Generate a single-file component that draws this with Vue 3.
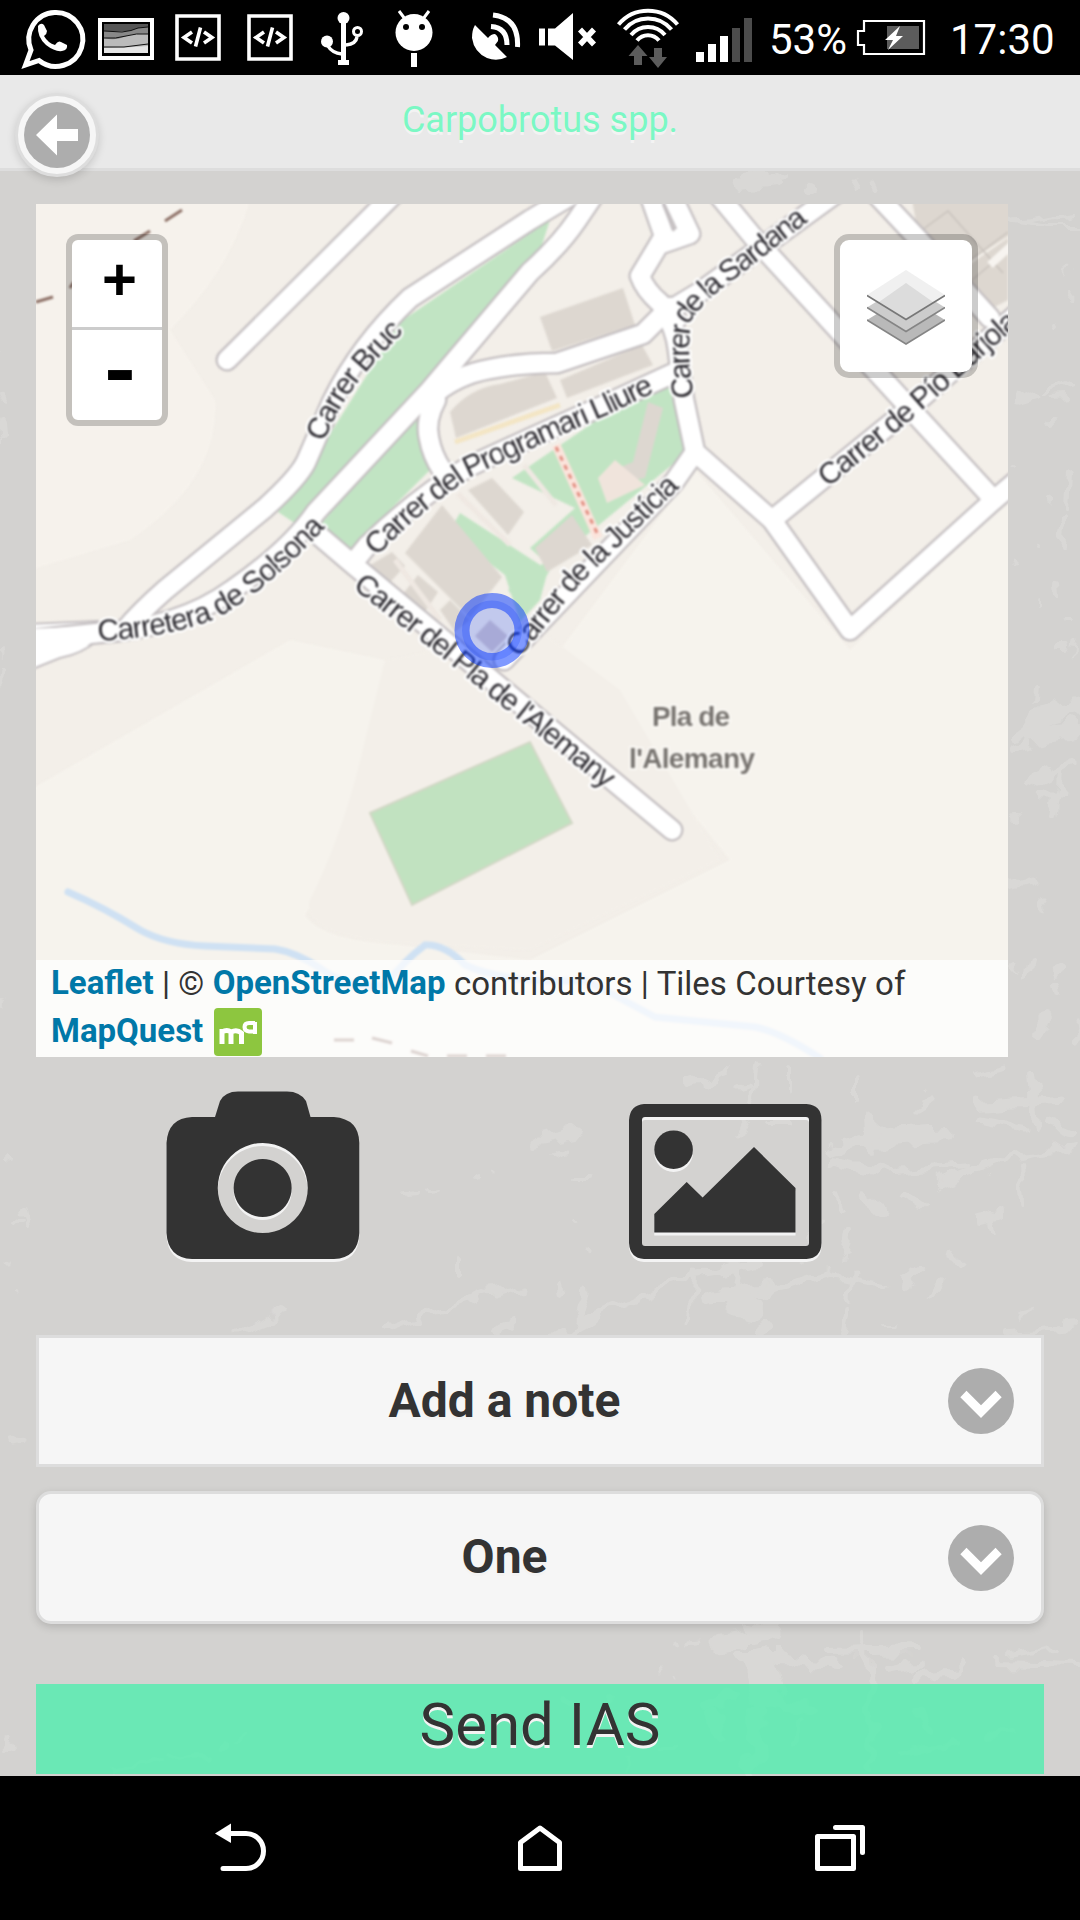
<script setup>
const scratches = [
  [745, 176, 762, 172, 10], [735, 186, 775, 182, 14], [780, 175, 790, 173, 6], [856, 176, 853, 190, 5], [870, 184, 873, 190, 7], [806, 186, 809, 188, 6],
  [1012, 222, 1078, 214, 4], [1012, 222, 1050, 227, 4], [1050, 227, 1079, 227, 4], [1018, 400, 1038, 394, 7], [1048, 391, 1070, 383, 6], [1056, 397, 1068, 396, 4],
  [1066, 275, 1074, 264, 3], [1067, 300, 1069, 290, 4], [1058, 323, 1059, 326, 4], [1052, 420, 1055, 420, 4], [1012, 465, 1013, 466, 5], [1071, 472, 1069, 508, 6],
  [1062, 545, 1067, 520, 8], [1048, 500, 1048, 504, 4], [1012, 558, 1012, 562, 5], [1036, 550, 1037, 552, 4], [1054, 585, 1055, 595, 6], [1039, 600, 1039, 606, 4],
  [1064, 618, 1070, 618, 4], [1060, 645, 1066, 645, 8], [1074, 640, 1072, 655, 3], [1037, 700, 1038, 690, 6], [1016, 736, 1040, 718, 12], [1040, 718, 1080, 705, 18],
  [1030, 735, 1079, 728, 16], [1012, 750, 1030, 745, 8], [1028, 785, 1070, 765, 7], [1060, 775, 1054, 820, 6], [1040, 795, 1054, 795, 9], [1014, 820, 1016, 820, 6],
  [1010, 887, 1034, 880, 7], [1042, 900, 1044, 908, 7], [1030, 960, 1026, 978, 8], [1054, 975, 1064, 970, 8], [1056, 985, 1058, 994, 6], [1014, 970, 1018, 968, 6], [1036, 1035, 1045, 1018, 12], [1076, 1020, 1078, 1038, 7],
  [2, 345, 2, 352, 4], [0, 392, 4, 398, 6], [2, 420, 3, 438, 6], [3, 655, 4, 656, 5], [2, 670, 1, 682, 5], [0, 1000, 2, 1001, 4],
  [688, 1083, 732, 1072, 6], [757, 1068, 752, 1110, 5], [790, 1066, 790, 1090, 4], [742, 1088, 750, 1085, 5], [754, 1100, 740, 1135, 5], [765, 1122, 784, 1122, 4],
  [533, 1143, 580, 1134, 8], [553, 1157, 563, 1152, 4], [408, 1194, 418, 1193, 6], [432, 1192, 438, 1191, 4], [478, 1174, 478, 1178, 4], [495, 1170, 495, 1173, 3], [577, 1180, 583, 1180, 4],
  [572, 1218, 573, 1222, 4], [459, 1260, 459, 1274, 6], [589, 1250, 590, 1256, 5], [560, 1285, 562, 1294, 5], [588, 1290, 578, 1325, 7], [496, 1296, 526, 1287, 5], [386, 1331, 480, 1295, 6],
  [480, 1295, 526, 1290, 4], [240, 1331, 289, 1311, 5], [545, 1345, 590, 1320, 8], [590, 1320, 690, 1275, 6], [690, 1275, 760, 1262, 8], [495, 1331, 510, 1325, 8], [695, 1270, 691, 1325, 5],
  [710, 1298, 770, 1288, 16], [735, 1305, 760, 1310, 20], [760, 1290, 830, 1275, 8], [830, 1275, 885, 1285, 5], [850, 1230, 845, 1255, 8], [852, 1270, 850, 1298, 7], [850, 1310, 845, 1331, 6],
  [755, 1330, 772, 1326, 8], [885, 1326, 900, 1326, 4], [908, 1280, 922, 1270, 8], [930, 1295, 940, 1280, 5], [952, 1260, 956, 1262, 7], [830, 1150, 880, 1135, 11], [860, 1140, 945, 1134, 14],
  [870, 1120, 872, 1145, 14], [855, 1080, 855, 1100, 6], [830, 1162, 880, 1172, 10], [880, 1172, 970, 1165, 6], [940, 1183, 1000, 1160, 8], [1000, 1160, 1076, 1145, 6], [1020, 1165, 1023, 1200, 6],
  [835, 1195, 840, 1206, 6], [862, 1195, 882, 1210, 9], [905, 1195, 920, 1205, 8], [978, 1220, 1002, 1215, 8], [990, 1215, 993, 1232, 6], [915, 1110, 935, 1098, 7], [975, 1105, 1060, 1100, 10],
  [1030, 1075, 1035, 1125, 10], [980, 1120, 1020, 1128, 7], [1050, 1122, 1070, 1130, 8], [975, 1075, 1010, 1068, 5], [1005, 1330, 1079, 1325, 6], [1020, 1318, 1030, 1312, 5],
  [820, 1225, 800, 1260, 5], [740, 1270, 735, 1290, 7], [24, 1207, 29, 1230, 6], [5, 1160, 5, 1163, 4], [16, 1221, 20, 1222, 6], [8, 1264, 12, 1264, 5], [16, 1296, 17, 1297, 3], [11, 1442, 18, 1441, 9],
  [720, 1643, 775, 1632, 15], [745, 1625, 765, 1630, 10], [740, 1655, 780, 1655, 12], [760, 1665, 765, 1690, 34], [780, 1660, 835, 1665, 8], [865, 1628, 862, 1650, 6], [868, 1650, 870, 1695, 8],
  [830, 1652, 920, 1650, 8], [890, 1670, 915, 1665, 8], [918, 1675, 955, 1672, 9], [955, 1672, 965, 1660, 5], [995, 1663, 1079, 1665, 6], [1010, 1655, 1055, 1647, 4], [672, 1645, 675, 1648, 4],
  [690, 1643, 700, 1642, 5], [660, 1670, 662, 1676, 3], [675, 1678, 676, 1680, 3], [710, 1705, 735, 1695, 10], [715, 1715, 720, 1735, 12], [755, 1710, 757, 1770, 12], [765, 1700, 810, 1708, 10],
  [800, 1720, 795, 1740, 7], [870, 1700, 873, 1770, 7], [745, 1760, 750, 1775, 10], [565, 1701, 566, 1703, 7], [610, 1700, 614, 1696, 4], [220, 1748, 230, 1743, 6], [170, 1758, 205, 1754, 5],
  [110, 1770, 160, 1760, 5], [240, 1740, 242, 1739, 4], [662, 1750, 672, 1750, 6], [8, 1742, 9, 1750, 8], [625, 1757, 625, 1774, 3], [900, 1755, 960, 1745, 5], [920, 1710, 930, 1725, 8], [985, 1740, 1010, 1730, 6],
]

const roads = [
  'M400,188 L227,360',
  'M570,196 L530,220 L410,298 Q360,345 332,402 L306,462 Q298,478 265,508 L165,590 Q140,612 125,630',
  'M596,192 L577,220 Q560,245 530,272 L430,390 L316,512 Q290,550 232,590 Q180,628 98,633 L30,640',
  'M316,533 L350,562 L672,830',
  'M354,562 L367,546 Q420,495 470,466 Q530,438 600,407 L676,372',
  'M430,398 Q455,375 490,369 Q520,363 557,363 L643,334 L670,307',
  'M436,400 Q425,420 429,438 Q432,455 442,470',
  'M650,196 L664,236 L640,276 Q645,290 660,303 L676,320',
  'M672,196 L690,234 L664,243',
  'M663,308 Q676,330 678,350 L684,400 L695,452 L772,520 L850,630 L994,500 L1020,478',
  'M662,315 L700,292 L835,194',
  'M716,192 L754,238 L904,402 L994,500',
  'M874,192 L921,242 L990,318',
  'M772,520 L905,412 L1016,315',
  'M695,452 L674,482 L504,660',
]

const labels = [
  { id: 'bruc', d: 'M314,438 Q326,405 351,373 Q374,345 404,316', text: 'Carrer Bruc', len: 142 },
  { id: 'solsona', d: 'M97,630 Q170,626 212,608 Q258,584 320,517', text: 'Carretera de Solsona', len: 256 },
  { id: 'pla', d: 'M359,579 L439,641 L507,696 L620,787', text: "Carrer del Pla de l'Alemany", len: 324 },
  { id: 'programari', d: 'M369,549 Q415,500 470,465 Q540,432 600,406 L665,375', text: 'Carrer del Programari Lliure', len: 330 },
  { id: 'justicia', d: 'M511,651 L573,575 L680,472', text: 'Carrer de la Justícia', len: 236 },
  { id: 'sardana', d: 'M683,399 Q674,345 682,314 Q696,292 735,265 L830,190', text: 'Carrer de la Sardana', len: 243 },
  { id: 'pio', d: 'M821,479 L900,415 L1030,300', text: 'Carrer de Pío Barjola', len: 252 },
]
</script>

<template>
  <div class="screen">
    <header class="status">
      <div class="icons">
        <svg width="90" height="75" viewBox="2 1 90 75"><path d="M27.500,66 L33,51 A27,27 0 1 1 41,61.500 Z" fill="none" stroke="#fff" stroke-width="5" /><path d="M40,27 Q43,23 46,26 L49,32 Q49,35 46,37 Q50,44 57,46 Q60,41 63,43 L69,46 Q70,51 64,52 Q57,53 48,46 Q39,38 40,27Z" fill="#fff" /></svg>
        <svg width="75" height="75" viewBox="90 0 75 75"><rect x="100" y="20" width="52" height="38" fill="#000" stroke="#fff" stroke-width="4" /><path d="M104,24h44v29h-44z" fill="#e6e6e6" /><path d="M104,24h44v22l-14,1 -30,1z" fill="#bbb" /><path d="M104,24h44v10q-14,-1 -24,3t-20,1z" fill="#888" /><path d="M104,24h44v3q-10,0 -18,4l-26,0z" fill="#555" /><path d="M104,31l18,1q10,-1 16,-4l10,-1M104,38q12,1 22,-2t22,-2M104,47l20,0 24,-3" fill="none" stroke="#111" stroke-width="1" /></svg>
        <svg width="72" height="75" viewBox="165 0 72 75"><path d="M177,16h42v43h-42zM192,32l-8,5.500 8,5.500M204,32l8,5.500 -8,5.500M200.500,27.500l-5,19" fill="none" stroke="#fff" stroke-width="3.600" /></svg>
        <svg width="72" height="75" viewBox="165 0 72 75"><path d="M177,16h42v43h-42zM192,32l-8,5.500 8,5.500M204,32l8,5.500 -8,5.500M200.500,27.500l-5,19" fill="none" stroke="#fff" stroke-width="3.600" /></svg>
        <svg width="71" height="75" viewBox="309 0 71 75"><g fill="#fff"><circle cx="343.500" cy="18" r="6" /><circle cx="327" cy="41.500" r="6" /><path d="M338,60h11v5h-11zM341,18h5v43h-5z" /></g><path d="M328,46q4,7 14,8M346,45q10,-1 11,-8" fill="none" stroke="#fff" stroke-width="3.500" /><circle cx="357.500" cy="31.500" r="4" fill="none" stroke="#fff" stroke-width="3" /></svg>
        <svg width="70" height="75" viewBox="380 0 70 75"><ellipse cx="414" cy="32.500" rx="18.500" ry="18.500" fill="#fff" /><path d="M399,11l6,8M429,11l-6,8" stroke="#fff" stroke-width="3" /><path d="M411,53h6v14h-6z" fill="#fff" /><circle cx="406" cy="27" r="3" /><circle cx="422" cy="27" r="3" /></svg>
        <svg width="80" height="75" viewBox="450 0 80 75"><path d="M475,25 L488,38 Q491,34 495,34 Q499,37 498,41 L495,45 L507,57 Q497,62 487,58 Q474,52 472,38 Q472,30 475,25Z" fill="#fff" /><path d="M491,26.500q16,1 16,18.500M493,15q26,3 24.500,32" fill="none" stroke="#fff" stroke-width="5" /></svg>
        <svg width="75" height="75" viewBox="530 0 75 75"><path d="M539,28.500h6v17h-6zM548,28.500h7L573,13v47L555,45.500h-7z" fill="#fff" /><path d="M580,29.500l14,15M594,29.500l-14,15" stroke="#fff" stroke-width="5.500" /></svg>
        <svg width="85" height="75" viewBox="605 0 85 75"><path d="M618.500,24.500a38.500,38.500 0 0 1 59,0M624.500,29.500a30.500,30.500 0 0 1 47,0M631,35a22,22 0 0 1 34,0M637,40.500a14,14 0 0 1 22,0" fill="none" stroke="#fff" stroke-width="4" /><path d="M638,45l9.500,11h-5.500v9h-8v-9h-5.500zM658,68l-9,-11h5v-9h8v9h5z" fill="#5c5c5c" /></svg>
        <svg width="72" height="75" viewBox="690 0 72 75"><path d="M696,52h8v10h-8zM708,44h8v18h-8zM720,36h8v26h-8z" fill="#fff" /><path d="M732,28h8v34h-8zM744,18h8v44h-8z" fill="#4c4c4c" /></svg>
      </div>
      <span class="percent">53%</span>
      <svg class="battery" width="72" height="75" viewBox="855 0 72 75"><path d="M864,21h60v33h-60v-9h-6v-14h6z" fill="none" stroke="#fff" stroke-width="2.200" /><path d="M887,26h32v23h-32z" fill="#5c5c5c" /><path d="M900,26l-15,14h8l-5,10 15,-14h-7z" fill="#fff" /></svg>
      <span class="clock">17:30</span>
    </header>

    <main class="page">
      <svg class="texture" viewBox="0 171 1080 1605">
        <filter id="rough" x="0" y="0" width="100%" height="100%"><feTurbulence type="fractalNoise" baseFrequency=".05" numOctaves="2" seed="4" /><feDisplacementMap in="SourceGraphic" scale="24" xChannelSelector="R" yChannelSelector="G" /></filter>
        <g filter="url(#rough)"><rect x="0" y="171" width="1080" height="1605" fill="#d3d2d0" stroke="none" /><line v-for="(s, i) in scratches" :key="i" :x1="s[0]" :y1="s[1]" :x2="s[2]" :y2="s[3]" :stroke-width="s[4]" /></g>
      </svg>

      <div class="titlebar">
        <h1>Carpobrotus spp.</h1>
        <button class="back" aria-label="Back"><svg width="66" height="66" viewBox="24 102 66 66"><circle cx="57" cy="135" r="33" fill="#adadad" /><path d="M36,135L57,114.500V129H78v12H57v14.500z" fill="#fff" /></svg></button>
      </div>

      <section class="map">
        <svg class="tiles" viewBox="36 204 972 853">
          <rect x="36" y="204" width="972" height="853" fill="#f3efe9" />
          <g class="soft">
            <path d="M30,200H250Q230,270 170,330L215,400Q220,480 130,540L30,570z" fill="#f6f2ec" />
            <path d="M30,790L290,640 385,660 370,760Q345,850 305,915Q320,940 400,945L530,960 730,860 560,650 695,470 850,650 1010,500V1060H30z" fill="#f6f3ed" />
            <path d="M385,660L540,630 620,690 720,860 530,950 380,942Q300,930 310,900Q345,830 365,740z" fill="#f3efe9" />
            <g fill="#c1e4c3">
              <path d="M550,220L530,282 430,388 305,530 278,512 320,450 400,322z" />
              <path d="M422,408L432,468 392,508 352,558 320,525z" />
              <path d="M512,478L600,418 670,382 690,450 605,520 556,560 525,612 508,590 545,562 530,548 575,508z" />
              <path d="M460,513L449,532 505,575 520,622 540,600 548,570z" />
            </g>
            <g fill="#ddd7d0">
              <path d="M540,317L623,288 635,325 552,351z" /><path d="M560,380L642,345 653,365 567,398z" />
              <path d="M450,412Q470,388 500,384L545,372 557,398 456,438z" />
              <path d="M468,490L492,478 524,512 508,535z" /><path d="M405,553L442,505 502,577 470,618z" />
              <path d="M362,570L392,552 405,566 385,588zM402,595L418,575 438,592 425,612zM440,610L450,600 470,620 455,632z" />
              <path d="M535,548L572,515 592,545 547,572z" /><path d="M648,402L663,408 645,478 620,482 608,472 633,462z" />
              <path d="M475,636L490,620 508,636 492,652z" fill="#d3c9cd" />
              <path d="M912,200H1010V235L955,270 918,233z" /><path d="M955,275L1008,238V300L985,312z" />
            </g>
            <path d="M598,478L615,460 645,485 607,503z" fill="#f0e4dc" />
            <path d="M918,233l30,-22 55,62M1008,232l-60,45M960,290l30,-25" fill="none" stroke="#c9c3bd" stroke-width="1.500" />
            <path d="M990,265L1012,245" stroke="#f7f4f0" stroke-width="8" />
            <path d="M455,442L560,405M395,525L430,488" stroke="#f3e5c4" stroke-width="5" />
            <path d="M458,494L510,545M395,560L440,620M524,465L556,505" stroke="#efe8e2" stroke-width="5" />
            <path d="M556,445L598,538" stroke="#fbe4dc" stroke-width="9" /><path d="M556,447L598,535" stroke="#e29184" stroke-width="3" stroke-dasharray="5 5" />
            <path d="M370,813L530,742 572,823 412,905z" fill="#c1e2c0" stroke="#d2d7c6" stroke-width="2" />
            <path d="M68,892Q105,908 140,930Q165,944 205,946L275,949Q295,952 320,968Q350,990 385,985Q405,960 425,945Q445,944 465,965Q510,985 585,980Q620,998 655,1017L755,1027Q780,1032 820,1058" fill="none" stroke="#cfe1f3" stroke-width="7" stroke-linecap="round" />
            <path d="M36,302l17,-5M70,288l4,-6M134,241l16,-10M165,221l17,-11M334,1040h20M372,1038l20,5M411,1051l17,5M447,1056h20M486,1056h20" fill="none" stroke="#8d7066" stroke-width="3" />
            <path d="M30,624L98,621 98,640Q82,654 60,658L30,670z" fill="#fff" stroke="#c4bfc1" stroke-width="2" />
            <g fill="none" stroke-linecap="round" stroke-linejoin="round">
              <path v-for="d in roads" :key="d" :d="d" stroke="#c4bfc1" stroke-width="23" />
              <path v-for="d in roads" :key="d" :d="d" stroke="#fff" stroke-width="18.500" />
            </g>
            <path d="M26,629L100,626 94,641Q80,652 58,656L26,667z" fill="#fff" />
            <path d="M663,204L674,231" stroke="#c4bfc1" stroke-width="2.500" />
            <g class="street">
              <template v-for="l in labels" :key="l.id">
                <path :id="l.id" :d="l.d" fill="none" stroke="none" />
                <text :textLength="l.len" dominant-baseline="central"><textPath :href="'#' + l.id" :textLength="l.len">{{ l.text }}</textPath></text>
              </template>
            </g>
            <g class="place"><text x="691" y="726" textLength="78">Pla de</text><text x="692" y="768" textLength="126">l'Alemany</text></g>
          </g>
          <circle cx="492" cy="630.500" r="30" fill="#03f" fill-opacity=".2" stroke="#03f" stroke-opacity=".5" stroke-width="15" />
        </svg>
        <div class="zoom"><button>+</button><button class="out">-</button></div>
        <div class="layers"><svg width="78" height="76" viewBox="867 270 78 76"><path d="M867,320l39,-24 39,24 -39,24z" fill="#b9b9b9" /><path d="M867,320l39,24 39,-24" fill="none" stroke="#858585" stroke-width="1.500" /><path d="M867,307.500l39,-24 39,24 -39,24z" fill="#ccc" /><path d="M867,307.500l39,24 39,-24" fill="none" stroke="#858585" stroke-width="1.500" /><path d="M867,295l39,-25 39,25 -39,24z" fill="#f0f0f0" /><path d="M879,302l27,-19 27,19 -27,17z" fill="#dcdcdc" /><path d="M867,295.500l39,24 39,-24" fill="none" stroke="#777" stroke-width="1.700" /></svg></div>
        <div class="credit"><a>Leaflet</a> | © <a>OpenStreetMap</a> contributors | Tiles Courtesy of <a>MapQuest</a> <svg width="48" height="48" viewBox="0 0 48 48"><rect width="48" height="48" rx="4" fill="#8dc63f" /><path d="M8,36V21M8,24q5,-3 9,0v12M17,24q6,-3 10.500,1v11" fill="none" stroke="#fff" stroke-width="5" /><path d="M41,26V14M41,15h-6q-4.500,0 -4.500,4t4.500,4.500h6" fill="none" stroke="#fff" stroke-width="4" /></svg></div>
      </section>

      <div class="media">
        <svg width="194" height="173" viewBox="166 1091 194 173"><path fill-rule="evenodd" d="M192,1117H215L220,1101Q225,1091.500 238,1091.500H287Q300,1091.500 306,1101L310.500,1117H334Q359,1119 359.300,1143V1233Q358,1258 334,1259H192Q168,1258 166.500,1233V1143Q168,1118 192,1117ZM262.700,1143a45,45 0 1 0 .1,0ZM262.700,1159a29,29 0 1 1 -.1,0Z" /></svg>
        <svg width="194" height="160" viewBox="629 1104 194 160"><path fill-rule="evenodd" d="M644,1104H806.500Q821.500,1105 821.500,1120V1243Q821,1258 806.500,1259H644Q630,1258 629,1243V1120Q630,1105 644,1104ZM645,1117Q642,1117 642,1120V1243Q642,1246 645,1246H806Q809,1246 809,1243V1120Q809,1117 806,1117Z" /><circle cx="673.600" cy="1149.700" r="19.300" /><path d="M654.300,1232.500V1214L686.700,1182 702.600,1197.500 754,1147 795.500,1188V1232.500z" /></svg>
      </div>

      <button v-for="(label, i) in ['Add a note', 'One']" :key="label" class="field" :class="{ select: i === 1 }">
        <span>{{ label }}</span>
        <svg width="66" height="66" viewBox="948 1368 66 66"><circle cx="981" cy="1401" r="33" fill="#adadad" /><path d="M960.300,1397.300l6.200,-6.500 14.500,14.500 14.500,-14.500 6.200,6.500L981,1418z" fill="#fff" /></svg>
      </button>

      <button class="send">Send IAS</button>
    </main>

    <nav class="nav">
      <svg width="54" height="50" viewBox="214 1823 54 50"><path d="M215,1833.500l16,-10v19.500z" fill="#fff" /><path d="M229,1833.500h17a17.500,17.500 0 0 1 0,35h-23" fill="none" stroke="#fff" stroke-width="5" stroke-linecap="round" /></svg>
      <svg width="54" height="50" viewBox="513 1823 54 50"><path d="M520.500,1868.500V1842.500L540,1828l19.500,14.500v26z" fill="none" stroke="#fff" stroke-width="5" stroke-linejoin="round" /></svg>
      <svg width="54" height="50" viewBox="812 1823 54 50"><path d="M817.500,1836.500h36v32h-36zM835.500,1827.500h27v25" fill="none" stroke="#fff" stroke-width="5" stroke-linejoin="round" stroke-linecap="round" /></svg>
    </nav>
  </div>
</template>

<style>
body { margin: 0; background: #000; }
</style>

<style scoped>
.screen { width: 1080px; height: 1920px; display: flex; flex-direction: column; overflow: hidden; font-family: Roboto, "Liberation Sans", sans-serif; color: #333; }
svg { display: block; flex: none; }
button { font-family: inherit; color: inherit; margin: 0; padding: 0; border: 0; background: none; }
.status { height: 75px; flex: none; display: flex; align-items: center; background: #000; color: #fff; font-size: 42px; line-height: 75px; white-space: nowrap; }
.icons { display: flex; width: 762px; }
.percent { width: 86px; margin-left: 7px; padding-top: 4px; box-sizing: border-box; }
.clock { margin-left: 23px; padding-top: 4px; }
.page { position: relative; height: 1701px; flex: none; display: flex; flex-direction: column; background: #d3d2d0; }
.texture { position: absolute; left: 0; top: 96px; width: 1080px; height: 1605px; stroke: #d9d8d6; stroke-linecap: round; }
.titlebar { position: relative; height: 93px; flex: none; background: #e9e9e9; border-bottom: 3px solid #ddd; }
h1 { margin: 0; padding-top: 20px; text-align: center; font-size: 36px; line-height: 50px; font-weight: 400; color: #7bf8c4; text-shadow: 0 3px 0 #f3f3f3; }
.back { position: absolute; left: 15px; top: 18px; width: 84px; height: 84px; box-sizing: border-box; padding: 6px; border: 3px solid #ddd; border-radius: 50%; background: #f6f6f6; box-shadow: 0 3px 9px rgba(0, 0, 0, .15); }
.map { position: relative; width: 972px; height: 853px; flex: none; margin: 33px 0 0 36px; overflow: hidden; }
.tiles { width: 972px; height: 853px; }
.soft { filter: blur(.9px); }
.street { font: 30px "Liberation Sans", sans-serif; fill: #2c2a30; stroke: #fff; stroke-width: 5px; paint-order: stroke; stroke-linejoin: round; }
.place { font: bold 28px "Liberation Sans", sans-serif; text-anchor: middle; fill: #77736f; stroke: #faf8f4; stroke-width: 4px; paint-order: stroke; }
.zoom { position: absolute; left: 30px; top: 30px; width: 90px; border: 6px solid rgba(0, 0, 0, .2); border-radius: 12px; background: #fff; background-clip: padding-box; }
.zoom button { display: block; width: 90px; height: 90px; box-sizing: border-box; padding-left: 5px; font: bold 60px/74px "Liberation Mono", monospace; color: #000; border-bottom: 3px solid #ccc; }
.zoom .out { border: 0; padding-left: 6px; font-size: 84px; line-height: 84px; }
.layers { position: absolute; right: 30px; top: 30px; width: 132px; height: 132px; display: flex; align-items: center; justify-content: center; border: 6px solid rgba(0, 0, 0, .2); border-radius: 15px; background: #fff; background-clip: padding-box; }
.layers svg { margin-top: 3px; }
.credit { position: absolute; left: 0; right: 0; bottom: 0; height: 97px; box-sizing: border-box; padding: 0 60px 0 15px; background: rgba(255, 255, 255, .7); font-size: 33px; line-height: 48px; word-spacing: .2px; margin-top: -1px; color: #333; }
.credit a { position: relative; top: -1px; color: #0078a8; font-weight: 700; }
.credit svg { display: inline-block; vertical-align: middle; position: relative; top: -2px; left: 2px; }
.media { position: relative; display: flex; align-items: flex-end; gap: 269px; height: 207px; margin-left: 166px; }
.media svg { fill: #333; filter: drop-shadow(0 3px 0 #f3f3f3); overflow: visible; }
.field { position: relative; display: flex; align-items: center; width: 1008px; height: 132px; flex: none; box-sizing: border-box; margin: 71px 0 0 36px; border: 3px solid #ddd; background: #f6f6f6; font-size: 48px; font-weight: 700; text-shadow: 0 3px 0 #f3f3f3; }
.field span { flex: 1; margin-left: 36px; padding-right: 14px; text-align: center; margin-top: -2px; }
.field svg { margin-right: 27px; }
.select { height: 133px; margin-top: 24px; border-radius: 15px; box-shadow: 0 3px 9px rgba(0, 0, 0, .15); }
.select span { margin-top: -3px; }
.send { position: relative; width: 1008px; height: 90px; flex: none; margin: 60px 0 0 36px; padding-bottom: 8px; background: rgba(80, 237, 174, .8); font-size: 60px; line-height: 82px; text-shadow: 0 3px 0 #f3f3f3; }
.nav { height: 144px; display: flex; align-items: center; justify-content: center; gap: 245px; background: #000; }
</style>
